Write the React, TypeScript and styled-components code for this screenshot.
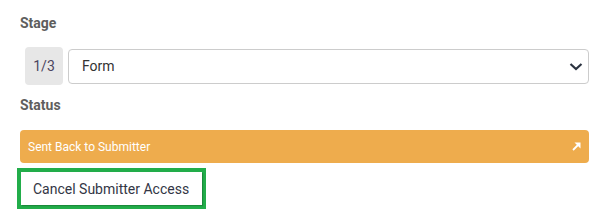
import React from "react";
import styled, { createGlobalStyle } from "styled-components";

const Global = createGlobalStyle`
  html, body { margin: 0; padding: 0; background: #fff; }
  body { font-family: Roboto, "Liberation Sans", Arial, sans-serif; }
  * { box-sizing: border-box; }
`;

const Page = styled.div`
  width: 605px;
  height: 213px;
  padding: 12.5px 16px 0 20px;
  display: flex;
  flex-direction: column;
`;

const Label = styled.div<{ $mt?: number }>`
  font-size: 14px;
  font-weight: 700;
  line-height: 20px;
  color: #5e5e5e;
  margin-top: ${(p) => p.$mt ?? 0}px;
`;

const StageRow = styled.div`
  display: flex;
  align-items: center;
  gap: 5px;
  margin-top: 14.5px;
  padding-left: 5px;
`;

const Badge = styled.div`
  width: 38px;
  height: 38px;
  border-radius: 4px;
  background: #e7e7e7;
  display: flex;
  align-items: center;
  justify-content: center;
  font-size: 14px;
  color: #4b4560;
`;

const Select = styled.div`
  flex: 1;
  height: 35px;
  border: 1px solid #cccccc;
  border-radius: 4px;
  display: flex;
  align-items: center;
  justify-content: space-between;
  padding: 0 5px 0 13px;
  font-size: 14px;
  color: #333;
`;

const StatusBar = styled.div`
  margin-top: 15.5px;
  height: 33px;
  border-radius: 4px;
  background: #eeac4d;
  color: #fff;
  display: flex;
  align-items: center;
  justify-content: space-between;
  padding: 0 8px 0 8px;
  font-size: 12px;
`;

const Highlight = styled.div`
  margin-top: 5px;
  margin-left: -3px;
  width: 189px;
  height: 41px;
  border: 4px solid #22ad4a;
`;

const CancelButton = styled.button`
  width: 100%;
  height: 100%;
  border: none;
  background: #fff;
  box-shadow: 1px 1px 1px rgba(0, 0, 0, 0.2);
  font-family: inherit;
  font-size: 14px;
  color: #333645;
  text-align: left;
  padding: 0 0 0 12px;
  cursor: pointer;
`;

export default function App() {
  return (
    <>
      <Global />
      <Page>
        <Label>Stage</Label>
        <StageRow>
          <Badge>1/3</Badge>
          <Select>
            <span>Form</span>
            <svg width="14" height="14" viewBox="0 0 14 14">
              <path d="M1.5 5 L7 10 L12.5 5" fill="none" stroke="#2b3340" strokeWidth="2.2" />
            </svg>
          </Select>
        </StageRow>
        <Label $mt={9.5}>Status</Label>
        <StatusBar>
          <span>Sent Back to Submitter</span>
          <svg width="9" height="9" viewBox="0 0 9 9">
            <path d="M1 8 L6 3" fill="none" stroke="#fff" strokeWidth="1.8" />
            <path d="M2.5 0.5 H8.5 V6.5 Z" fill="#fff" />
          </svg>
        </StatusBar>
        <Highlight>
          <CancelButton>Cancel Submitter Access</CancelButton>
        </Highlight>
      </Page>
    </>
  );
}
